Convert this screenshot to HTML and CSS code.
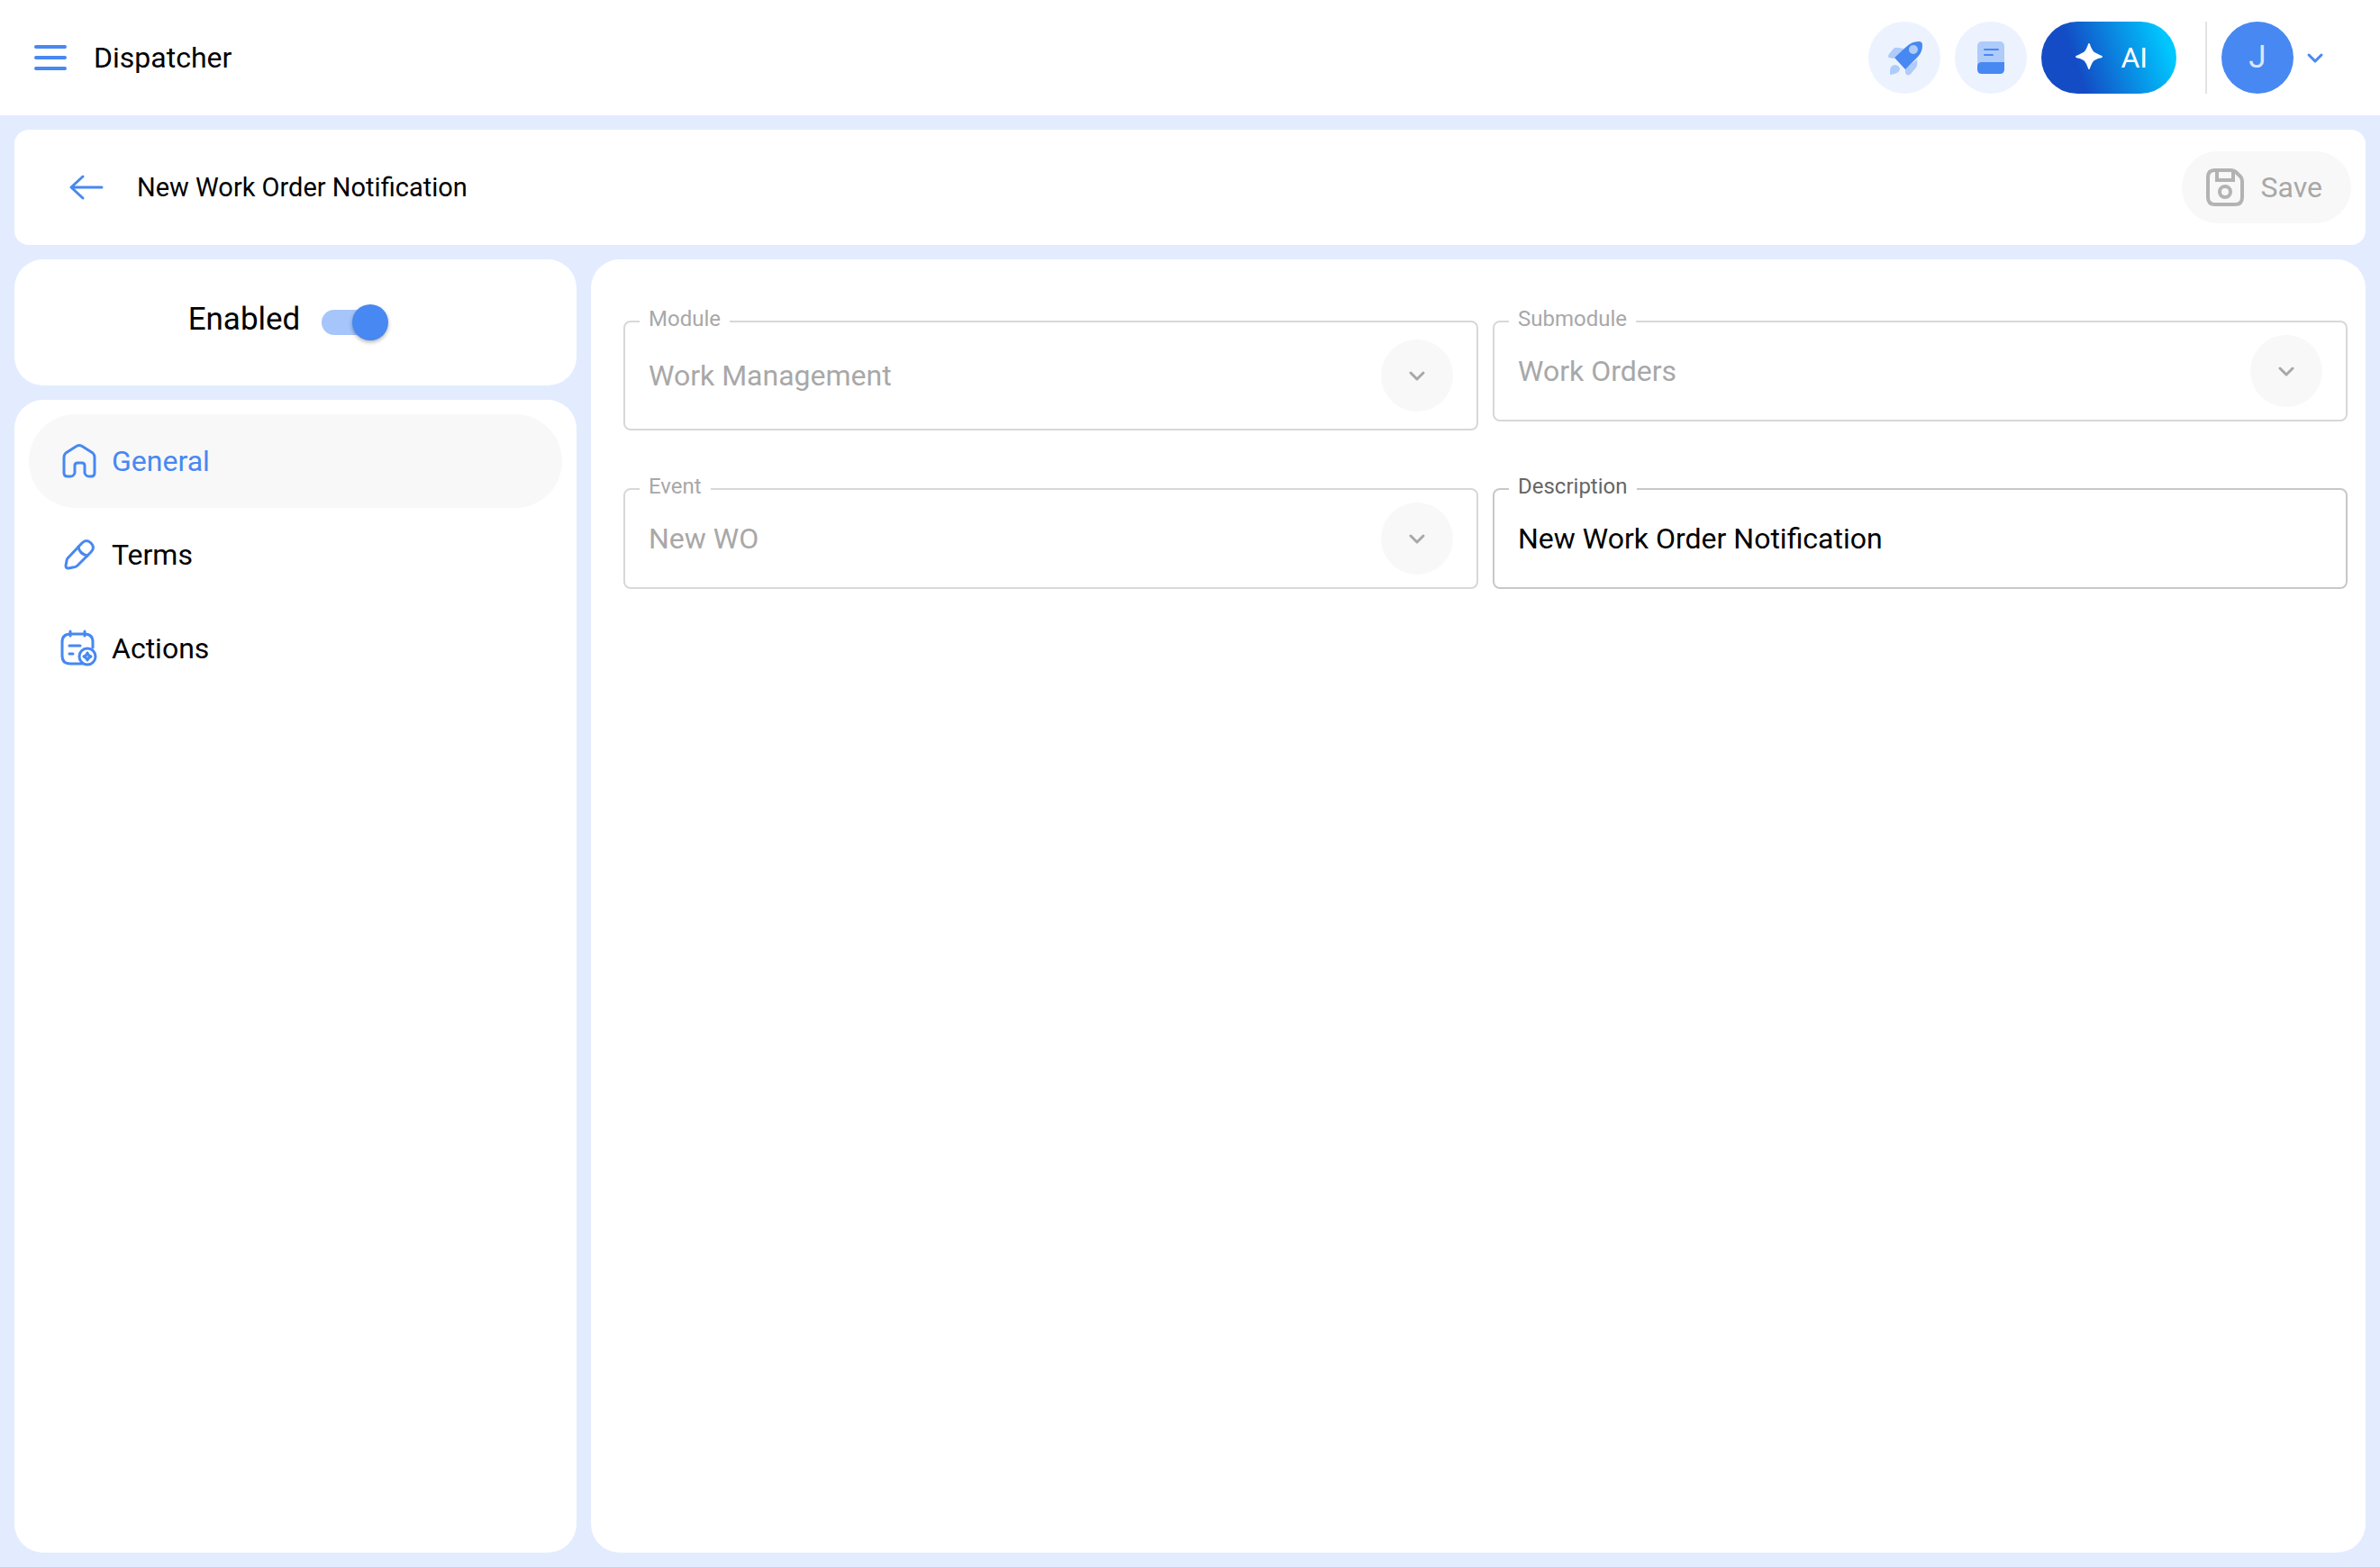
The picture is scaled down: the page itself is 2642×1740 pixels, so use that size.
FILE: index.html
```html
<!DOCTYPE html>
<html lang="en">
<head>
    <meta charset="UTF-8">
    <meta name="viewport" content="width=device-width, initial-scale=1.0">
    <title>New Work Order Notification - Dispatcher</title>
    <link rel="stylesheet" href="styles.css">
</head>
<body>
    <header class="topbar">
        <button class="icon-button" type="button" aria-label="Menu">
            <svg class="icon" viewBox="0 0 48 48" fill="none" stroke="currentColor" stroke-width="4" stroke-linecap="round">
                <path d="M8 12h32M8 24h32M8 36h32"/>
            </svg>
        </button>
        <div class="app-name">Dispatcher</div>

        <div class="topbar-actions">
            <button class="round-button" type="button" aria-label="What's new">
                <svg viewBox="-40 -40 80 80">
                    <path class="tint" d="M-12 1-17 0Q-19-1-17-4L-12-10Q-10-12-7-11L0-10ZM1 12 14 2Q15 8 13 11L8 17Q4 22 1 17Z"/>
                    <path class="tint" d="M-16 19Q-17 8-10 8-5 9-5 13-6 18-16 19Z"/>
                    <path class="solid" d="M-11 0 2-12Q8-18 16-18 20-18 20-14 20-6 15-1L1 13Z"/>
                    <circle class="tint" cx="10" cy="-9" r="5"/>
                </svg>
            </button>
            <button class="round-button" type="button" aria-label="Documentation">
                <svg viewBox="-40 -40 80 80">
                    <rect class="tint" x="-15" y="-18" width="30" height="30" rx="5"/>
                    <path class="solid" d="M-15 10Q-15 5-10 5H15V13Q15 18 10 18H-10Q-15 18-15 13Z"/>
                    <path class="line" d="M-7-9H8M-7-3H2"/>
                </svg>
            </button>
            <button class="ai-button" type="button">
                <svg class="spark" viewBox="0 0 32 32" fill="currentColor">
                    <path d="M17 0C18 0 18 2 20 6 22 10 23 10 27 12 31 14 32 14 32 15 32 16 31 16 27 17 23 19 22 19 20 23 18 27 18 29 17 29 16 29 16 27 14 23 12 19 11 19 7 17 3 16 2 16 2 15 2 14 3 14 7 12 11 10 12 10 14 6 16 2 16 0 17 0Z"/>
                </svg>
                AI
            </button>
            <div class="account">
                <span class="avatar">J</span>
                <button class="account-toggle" type="button" aria-label="Account menu">
                    <svg class="chevron" viewBox="0 0 24 24"><path d="m5 9 7 7 7-7"/></svg>
                </button>
            </div>
        </div>
    </header>

    <div class="page-bar">
        <button class="icon-button" type="button" aria-label="Back">
            <svg class="icon" viewBox="0 0 48 48" fill="none" stroke="currentColor" stroke-width="3" stroke-linecap="round" stroke-linejoin="round">
                <path d="M41 24H7M20 12 7 24l13 12"/>
            </svg>
        </button>
        <h1 class="page-title">New Work Order Notification</h1>
        <button class="save-button" type="button" disabled>
            <svg class="icon" viewBox="0 0 48 48" fill="none" stroke="currentColor" stroke-width="4">
                <path d="M12 5H31Q34 5 36 7L41 12Q43 14 43 17V35Q43 43 35 43H13Q5 43 5 35V13Q5 5 12 5Z"/>
                <path d="M15 5V16H33V5"/>
                <circle cx="24" cy="29" r="6"/>
            </svg>
            Save
        </button>
    </div>

    <div class="layout">
        <aside class="sidebar">
            <div class="card enabled-card">
                <label for="enabled">Enabled</label>
                <input class="switch" id="enabled" type="checkbox" role="switch" checked>
            </div>

            <nav class="card side-nav">
                <a class="nav-item active" href="#general">
                    <svg class="icon" viewBox="0 0 48 48">
                        <path d="M7 20Q7 17 9 15L20 8Q24 5 28 8L39 15Q41 17 41 20V37Q41 41 37 41H35Q31 41 30 37V29Q30 26 27 26H22Q19 26 19 29V37Q18 41 14 41H11Q7 41 7 37Z"/>
                    </svg>
                    General
                </a>
                <a class="nav-item" href="#terms">
                    <svg class="icon" viewBox="0 0 48 48">
                        <path d="M11 28 27 11Q32 6 37 11 42 16 37 21L22 36Q20 38 17 38L12 39Q9 39 9 36L10 31Q10 29 11 28Z"/>
                        <path d="M23 15Q24 23 33 25"/>
                    </svg>
                    Terms
                </a>
                <a class="nav-item" href="#actions">
                    <svg class="icon" viewBox="0 0 48 48">
                        <path d="M39 23V17Q39 8 30 8H14Q5 8 5 17V32Q5 41 14 41H27"/>
                        <path d="M14 5V10M30 5V10M13 21H25M13 30H17"/>
                        <circle cx="33" cy="33" r="9"/>
                        <path d="M33 29Q34 32 37 33 34 34 33 37 32 34 29 33 32 32 33 29Z"/>
                    </svg>
                    Actions
                </a>
            </nav>
        </aside>

        <main class="card form-grid">
            <div class="field tall disabled">
                <label for="module">Module</label>
                <select id="module" disabled>
                    <option>Work Management</option>
                </select>
                <span class="field-arrow"><svg class="chevron" viewBox="0 0 24 24"><path d="m5 9 7 7 7-7"/></svg></span>
            </div>
            <div class="field disabled">
                <label for="submodule">Submodule</label>
                <select id="submodule" disabled>
                    <option>Work Orders</option>
                </select>
                <span class="field-arrow"><svg class="chevron" viewBox="0 0 24 24"><path d="m5 9 7 7 7-7"/></svg></span>
            </div>
            <div class="field disabled">
                <label for="event">Event</label>
                <select id="event" disabled>
                    <option>New WO</option>
                </select>
                <span class="field-arrow"><svg class="chevron" viewBox="0 0 24 24"><path d="m5 9 7 7 7-7"/></svg></span>
            </div>
            <div class="field">
                <label for="description">Description</label>
                <input id="description" type="text" value="New Work Order Notification">
            </div>
        </main>
    </div>
</body>
</html>
```
FILE: styles.css
```css
:root {
    --blue: #4788f2;
    --blue-tint: #aecbfa;
    --blue-pale: #ecf3ff;
    --page-bg: #e3ecff;
    --gray-bg: #f8f8f8;
    --text: #000000;
    --text-disabled: #a8a8a8;
}

* {
    box-sizing: border-box;
}

body {
    display: flex;
    flex-direction: column;
    gap: 16px;
    min-height: 100vh;
    margin: 0;
    padding-bottom: 16px;
    background: var(--page-bg);
    color: var(--text);
    font-family: Roboto, sans-serif;
    font-size: 32px;
    line-height: 40px;
}

button, input, select {
    font: inherit;
}

button {
    margin: 0;
    padding: 0;
    border: none;
    background: none;
    cursor: pointer;
}

svg {
    display: block;
}

.icon {
    width: 48px;
    height: 48px;
}

.chevron {
    width: 24px;
    height: 24px;
    fill: none;
    stroke: currentColor;
    stroke-width: 3;
    stroke-linecap: round;
    stroke-linejoin: round;
}

.icon-button {
    color: var(--blue);
}

/* Top bar */
.topbar {
    display: flex;
    align-items: center;
    gap: 24px;
    height: 128px;
    padding: 0 60px 0 32px;
    background: #fff;
}

.topbar-actions {
    display: flex;
    gap: 16px;
    margin-left: auto;
}

.round-button {
    width: 80px;
    height: 80px;
    border-radius: 50%;
    background: var(--blue-pale);
}

.tint { fill: var(--blue-tint); }
.solid { fill: var(--blue); }

.line {
    fill: none;
    stroke: var(--blue);
    stroke-width: 2;
    stroke-linecap: round;
}

.ai-button {
    display: flex;
    align-items: center;
    gap: 20px;
    height: 80px;
    padding: 0 32px 0 36px;
    border-radius: 40px;
    background: linear-gradient(70deg, #134cc5 28%, #00c8ff 90%);
    color: #fff;
}

.spark {
    width: 32px;
    height: 32px;
}

.account {
    display: flex;
    align-items: center;
    gap: 12px;
    margin-left: 16px;
    padding-left: 16px;
    border-left: 2px solid #e3e3e3;
}

.avatar {
    width: 80px;
    border-radius: 50%;
    background: var(--blue);
    color: #dae7fc;
    font-size: 35px;
    line-height: 80px;
    text-align: center;
}

.account-toggle {
    color: var(--blue);
}

/* Page bar */
.page-bar {
    display: flex;
    align-items: center;
    gap: 32px;
    height: 128px;
    margin: 0 16px;
    padding: 0 16px 0 56px;
    border-radius: 16px;
    background: #fff;
}

.page-title {
    margin: 0;
    font-size: 29px;
    font-weight: 400;
}

.save-button {
    display: flex;
    align-items: center;
    gap: 16px;
    height: 80px;
    margin-left: auto;
    padding: 0 32px 0 24px;
    border-radius: 40px;
    background: var(--gray-bg);
    color: var(--text-disabled);
    cursor: default;
}

.save-button .icon {
    color: #b3b3b3;
}

/* Content */
.layout {
    display: flex;
    flex: 1;
    gap: 16px;
    padding: 0 16px;
}

.card {
    border-radius: 32px;
    background: #fff;
}

.sidebar {
    display: flex;
    flex-direction: column;
    flex: none;
    gap: 16px;
    width: 624px;
}

.enabled-card {
    display: flex;
    align-items: flex-end;
    justify-content: center;
    gap: 24px;
    padding: 42px 32px 50px 16px;
    font-size: 35px;
    line-height: 46px;
}

.switch {
    appearance: none;
    position: relative;
    width: 74px;
    height: 40px;
    margin: 2px 0 0;
    cursor: pointer;
}

.enabled-card label {
    padding-top: 2px;
}

.switch::before {
    content: "";
    position: absolute;
    inset: 6px 2px 6px 0;
    border-radius: 14px;
    background: #a6c5fa;
}

.switch::after {
    content: "";
    position: absolute;
    top: 0;
    left: 0;
    width: 40px;
    height: 40px;
    border-radius: 50%;
    background: var(--blue);
    box-shadow: 0 2px 4px rgba(0, 0, 0, 0.3);
}

.switch:checked::after {
    left: auto;
    right: 0;
}

.side-nav {
    flex: 1;
    padding: 16px;
}

.nav-item {
    display: flex;
    align-items: center;
    gap: 12px;
    height: 104px;
    padding: 0 32px;
    border-radius: 52px;
    color: var(--text);
    text-decoration: none;
}

.nav-item .icon {
    fill: none;
    stroke: var(--blue);
    stroke-width: 3;
    stroke-linecap: round;
    stroke-linejoin: round;
}

.nav-item.active {
    background: var(--gray-bg);
    color: var(--blue);
}

/* Form */
.form-grid {
    display: grid;
    flex: 1;
    grid-template-columns: 1fr 1fr;
    gap: 64px 16px;
    align-content: start;
    align-items: start;
    padding: 68px 20px 36px 36px;
}

.field {
    position: relative;
    display: flex;
    align-items: center;
    height: 112px;
    border: 2px solid #c8c8c8;
    border-radius: 8px;
}

.field.tall {
    height: 122px;
}

.field.disabled {
    border-color: #d8d8d8;
    color: var(--text-disabled);
}

.field label {
    position: absolute;
    top: -18px;
    left: 16px;
    padding: 0 10px;
    background: #fff;
    color: #666;
    font-size: 24px;
    line-height: 28px;
}

.field.disabled label {
    color: var(--text-disabled);
}

.field select,
.field input {
    appearance: none;
    flex: 1;
    align-self: stretch;
    min-width: 0;
    padding: 0 26px;
    border: none;
    border-radius: 8px;
    outline: none;
    background: none;
    color: inherit;
    opacity: 1;
}

.field-arrow {
    display: flex;
    align-items: center;
    justify-content: center;
    width: 80px;
    height: 80px;
    margin-right: 26px;
    border-radius: 50%;
    background: var(--gray-bg);
}
```
